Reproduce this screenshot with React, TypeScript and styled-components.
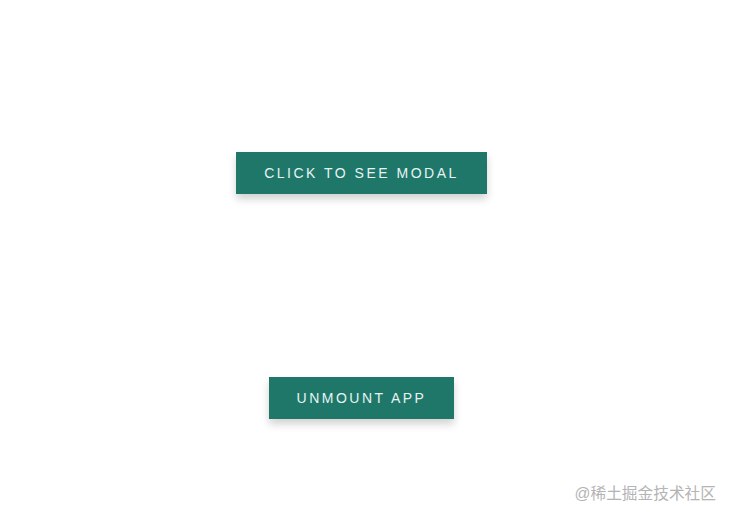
import styled, { createGlobalStyle } from 'styled-components';

const GlobalStyle = createGlobalStyle`
  html, body {
    margin: 0;
    padding: 0;
    background: #ffffff;
  }
  body {
    font-family: 'Liberation Sans', Arial, sans-serif;
  }
`;

const Page = styled.div`
  position: relative;
  width: 730px;
  height: 519px;
  display: flex;
  flex-direction: column;
  align-items: center;
  padding: 152px 7px 0 0;
  box-sizing: border-box;
  gap: 183px;
  overflow: hidden;
`;

const ActionButton = styled.button`
  height: 42px;
  padding: 0 28px;
  border: none;
  background-color: #1f776a;
  color: #e6f4f1;
  font-family: 'Liberation Sans', Arial, sans-serif;
  font-size: 14px;
  letter-spacing: 2.5px;
  text-transform: uppercase;
  cursor: pointer;
  box-shadow: 0 5px 8px rgba(0, 0, 0, 0.18);
`;

const Watermark = styled.span`
  position: absolute;
  right: 14px;
  bottom: 15px;
  font-family: 'Liberation Sans', 'Noto Sans CJK SC', sans-serif;
  font-size: 15.7px;
  color: #b4b4b4;
`;

export default function App() {
  return (
    <>
      <GlobalStyle />
      <Page>
        <ActionButton>Click to see modal</ActionButton>
        <ActionButton>Unmount app</ActionButton>
        <Watermark>@稀土掘金技术社区</Watermark>
      </Page>
    </>
  );
}
